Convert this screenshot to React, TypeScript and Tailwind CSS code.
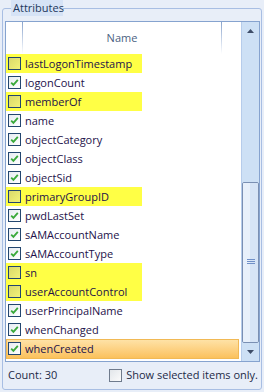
import React from "react";

type Item = { name: string; checked: boolean; hl?: "yellow" | "orange" };

const items: Item[] = [
  { name: "lastLogonTimestamp", checked: false, hl: "yellow" },
  { name: "logonCount", checked: true },
  { name: "memberOf", checked: false, hl: "yellow" },
  { name: "name", checked: true },
  { name: "objectCategory", checked: true },
  { name: "objectClass", checked: true },
  { name: "objectSid", checked: true },
  { name: "primaryGroupID", checked: false, hl: "yellow" },
  { name: "pwdLastSet", checked: true },
  { name: "sAMAccountName", checked: true },
  { name: "sAMAccountType", checked: true },
  { name: "sn", checked: false, hl: "yellow" },
  { name: "userAccountControl", checked: false, hl: "yellow" },
  { name: "userPrincipalName", checked: true },
  { name: "whenChanged", checked: true },
  { name: "whenCreated", checked: true, hl: "orange" },
];

function Check({ checked, onYellow }: { checked: boolean; onYellow: boolean }) {
  return (
    <div
      className={
        "w-[13px] h-[13px] border border-[#23466f] flex items-center justify-center shrink-0 " +
        (onYellow
          ? "bg-gradient-to-br from-[#d9d96a] to-[#f2f278]"
          : "bg-gradient-to-br from-[#e6ebf1] to-[#ffffff]")
      }
    >
      {checked && (
        <svg width="9" height="9" viewBox="0 0 9 9">
          <path d="M1.2 4.6 L3.4 6.9 L7.8 1.8" fill="none" stroke="#3aa93a" strokeWidth="1.8" />
        </svg>
      )}
    </div>
  );
}

function Row({ item }: { item: Item }) {
  return (
    <div className="relative h-[19px] flex items-center">
      {item.hl === "yellow" && <div className="absolute left-0 top-0 h-[19px] w-[136px] bg-[#ffff45]" />}
      {item.hl === "orange" && (
        <div className="absolute left-0 top-0 h-[20px] w-[233px] bg-gradient-to-b from-[#fee2a6] to-[#fbc15b] border border-[#f1b955]" />
      )}
      <div className="relative flex items-center pl-[2px]">
        <Check checked={item.checked} onYellow={item.hl === "yellow"} />
        <span className="ml-[4px] text-[11px] leading-[19px] text-[#24124a] whitespace-nowrap">{item.name}</span>
      </div>
    </div>
  );
}

export default function App() {
  return (
    <div className="w-[264px] h-[392px] bg-[#e8eef8] pt-[8px] px-[2px] pb-[2px] font-['Open_Sans',sans-serif]">
      <div className="relative h-full border border-[#a8bee3] rounded-[3px] pt-[12px] flex flex-col">
        <div className="absolute left-[8px] top-[-9px] h-[16px] w-[52px] bg-[#d6e3f6] text-[11px] leading-[15px] text-[#1c375c] pl-[2px]">
          Attributes
        </div>
        <div className="ml-[2px] mr-[1px] h-[341px] border border-[#86a3cf] bg-white flex">
          <div className="w-[235px] flex flex-col overflow-hidden">
            <div className="h-[32px] flex">
              <div className="w-[16px]" />
              <div className="w-px bg-gradient-to-b from-[#8aa4cc] to-white" />
              <div className="w-[198px] flex items-center justify-center text-[11px] text-[#4b5f82]">Name</div>
              <div className="w-px bg-gradient-to-b from-[#8aa4cc] to-white" />
              <div className="flex-1" />
            </div>
            <div className="flex flex-col">
              {items.map((it) => (
                <Row key={it.name} item={it} />
              ))}
            </div>
          </div>
          <div className="flex-1 bg-[#cde0f5] border-l border-[#b6cceb] flex flex-col items-center">
            <div className="h-[17px] w-full flex items-center justify-center">
              <svg width="7" height="4" viewBox="0 0 7 4">
                <path d="M0 4 L3.5 0 L7 4 Z" fill="#3e4d68" />
              </svg>
            </div>
            <div className="h-[143px]" />
            <div className="h-[161px] w-[17px] -ml-px border border-[#7a8fb3] rounded-[2px] flex overflow-hidden">
              <div className="w-[7px] bg-[#e8f0fb]" />
              <div className="flex-1 bg-[#d6e4f6]" />
            </div>
            <div className="relative -mt-[84px] h-[5px] w-[8px] flex flex-col justify-between">
              <div className="h-px bg-[#7090c8]" />
              <div className="h-px bg-[#7090c8]" />
              <div className="h-px bg-[#7090c8]" />
            </div>
            <div className="h-[79px]" />
            <div className="h-[17px] w-full flex items-center justify-center">
              <svg width="7" height="4" viewBox="0 0 7 4">
                <path d="M0 0 L7 0 L3.5 4 Z" fill="#3e4d68" />
              </svg>
            </div>
          </div>
        </div>
        <div className="flex-1 flex items-center pl-[5px] pr-[3px] text-[11px] text-[#1d2a47]">
          <span>Count: 30</span>
          <div className="ml-auto flex items-center">
            <div className="w-[13px] h-[13px] border border-[#6f7b8d] bg-gradient-to-br from-[#e2e6ea] to-[#fbfbfb]" />
            <span className="ml-[4px] whitespace-nowrap">Show selected items only.</span>
          </div>
        </div>
      </div>
    </div>
  );
}
